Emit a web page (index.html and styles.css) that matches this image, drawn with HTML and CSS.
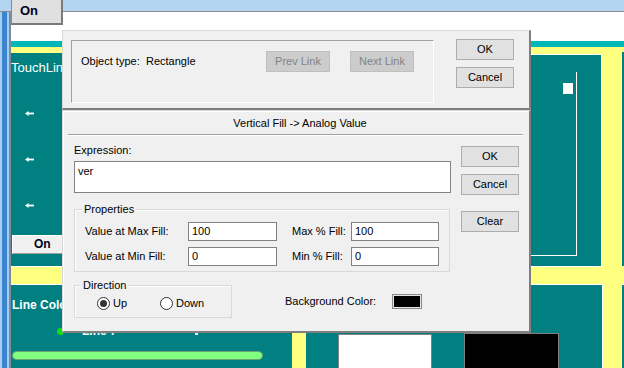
FILE: index.html
```html
<!DOCTYPE html>
<html>
<head>
<meta charset="utf-8">
<link rel="stylesheet" href="styles.css">
</head>
<body>
<div class="screen">
  <div class="titlebar"></div>
  <div class="main">
    <div class="frame"></div>
    <div class="canvas">
      <div class="obj strip-teal"></div>
      <div class="obj yellow-bg"></div>
      <div class="obj p-tl"></div>
      <div class="obj p-tr"></div>
      <div class="obj p-r"></div>
      <div class="obj p-bl"></div>
      <div class="obj p-br"></div>
      <div class="obj p-rr"></div>
      <div class="obj inner-outline"></div>
      <div class="obj wsquare"></div>
      <div class="obj wrect"></div>
      <div class="obj brect"></div>
      <div class="obj t-touch">TouchLine</div>
      <svg class="obj arrow a1" width="9" height="5" viewBox="0 0 9 5"><path d="M0 2.5 L3.5 0 L3.5 5 Z" fill="#fff"/><rect x="3" y="1.6" width="6" height="1.8" fill="#fff"/></svg>
      <svg class="obj arrow a2" width="9" height="5" viewBox="0 0 9 5"><path d="M0 2.5 L3.5 0 L3.5 5 Z" fill="#fff"/><rect x="3" y="1.6" width="6" height="1.8" fill="#fff"/></svg>
      <svg class="obj arrow a3" width="9" height="5" viewBox="0 0 9 5"><path d="M0 2.5 L3.5 0 L3.5 5 Z" fill="#fff"/><rect x="3" y="1.6" width="6" height="1.8" fill="#fff"/></svg>
      <div class="obj on-btn">On</div>
      <div class="obj t-linecol">Line Color</div>
      <div class="obj t-line7">Line 7</div>
      <div class="obj gdot"></div>
      <div class="obj wdash"></div>
      <div class="obj gline"></div>
    </div>
  </div>

  <div class="top-on">On</div>

  <div class="dlg dlg1">
    <div class="objbox">
      <span class="ot-label">Object type:</span>
      <span class="ot-value">Rectangle</span>
      <div class="btn dis">Prev Link</div>
      <div class="btn dis next">Next Link</div>
    </div>
    <div class="btncol1">
      <div class="btn">OK</div>
      <div class="btn">Cancel</div>
    </div>
  </div>

  <div class="dlg dlg2">
    <div class="title">Vertical Fill -&gt; Analog Value</div>
    <div class="sep"></div>
    <div class="body2">
      <div class="leftcol">
        <div class="lbl">Expression:</div>
        <div class="edit big">ver</div>
        <div class="group props">
          <span class="legend">Properties</span>
          <div class="pgrid">
            <span class="plbl">Value at Max Fill:</span>
            <div class="edit">100</div>
            <span class="plbl pl2">Max % Fill:</span>
            <div class="edit">100</div>
            <span class="plbl">Value at Min Fill:</span>
            <div class="edit">0</div>
            <span class="plbl pl2">Min % Fill:</span>
            <div class="edit">0</div>
          </div>
        </div>
        <div class="dirrow">
          <div class="group dir">
            <span class="legend dleg">Direction</span>
            <div class="radios">
              <div class="ritem first"><span class="radio on"></span><span>Up</span></div>
              <div class="ritem"><span class="radio"></span><span>Down</span></div>
            </div>
          </div>
          <span class="bglbl">Background Color:</span>
          <span class="swatch"></span>
        </div>
      </div>
      <div class="rightcol">
        <div class="btn">OK</div>
        <div class="btn b-cancel">Cancel</div>
        <div class="btn b-clear">Clear</div>
      </div>
    </div>
  </div>
</div>
</body>
</html>
```

FILE: styles.css
```css
html, body {
  margin: 0;
  padding: 0;
}
body {
  width: 624px;
  height: 368px;
  overflow: hidden;
  font-family: "Liberation Sans", Arial, sans-serif;
}
.screen {
  position: relative;
  width: 624px;
  height: 368px;
  overflow: hidden;
  display: flex;
  flex-direction: column;
  background: #fff;
}
.titlebar {
  height: 11px;
  flex: none;
  background: #b3d5f2;
  border-bottom: 1px solid #8c8c8c;
}
.main {
  flex: 1;
  display: flex;
  min-height: 0;
}
.frame {
  width: 11px;
  flex: none;
  background: linear-gradient(to right, #a9cdef 0 2px, #3b84d0 2px 7px, #a9cdef 7px 9px, #7a8a9a 9px 11px);
}
.canvas {
  flex: 1;
  position: relative;
  overflow: hidden;
  background: #fff;
}
.obj {
  position: absolute;
  box-sizing: border-box;
}
.strip-teal { left: 0; right: 0; top: 29px; height: 6px; background: #00b8b8; }
.yellow-bg { left: 0; right: 0; top: 35px; bottom: 0; background: #ffff80; }
.p-tl { left: -3px; top: 41px; width: 292px; height: 214px; background: #008080; border-bottom: 1px solid #fff; }
.p-tr { left: 289px; top: 42px; width: 302px; height: 213px; background: #008080; border: 1px solid #fff; border-left: none; }
.p-r { left: 610px; top: 40px; width: 20px; height: 214px; background: #008080; border-left: 1px solid #fff; }
.p-bl { left: -3px; top: 272px; width: 284px; height: 100px; background: #008080; border-top: 1px solid #fff; }
.p-br { left: 295px; top: 272px; width: 297px; height: 100px; background: #008080; border-top: 1px solid #fff; border-right: 1px solid #fff; }
.p-rr { left: 610px; top: 272px; width: 20px; height: 100px; background: #008080; border-left: 1px solid #fff; border-top: 1px solid #fff; }
.inner-outline { left: 329px; top: 60px; width: 237px; height: 184px; border-right: 1px solid #fff; border-bottom: 1px solid #fff; }
.wsquare { left: 552px; top: 71px; width: 10px; height: 11px; background: #fff; }
.wrect { left: 327px; top: 322px; width: 94px; height: 60px; background: #fff; border: 1px solid #808080; }
.brect { left: 453px; top: 321px; width: 95px; height: 60px; background: #000; border: 1px solid #808080; }
.t-touch {
  left: 0;
  top: 48px;
  color: #fff;
  font-size: 13px;
  line-height: 16px;
  white-space: nowrap;
}
.arrow { left: 14px; }
.a1 { top: 99px; }
.a2 { top: 145px; }
.a3 { top: 191px; }
.on-btn {
  left: 1px;
  top: 223px;
  width: 51px;
  height: 19px;
  background: #f0f0f0;
  border: 1px solid #a0a0a0;
  border-top-color: #fff;
  border-left-color: #fff;
  color: #000020;
  font-weight: bold;
  font-size: 12px;
  line-height: 17px;
  padding-left: 21px;
}
.t-linecol {
  left: 1px;
  top: 286px;
  color: #fff;
  font-weight: bold;
  font-size: 12px;
  line-height: 14px;
  white-space: nowrap;
}
.t-line7 {
  left: 71px;
  top: 312px;
  color: #fff;
  font-weight: bold;
  font-size: 12px;
  line-height: 14px;
  white-space: nowrap;
}
.gdot { left: 46px; top: 316px; width: 7px; height: 7px; border-radius: 50%; background: #10e010; }
.wdash { left: 184px; top: 321px; width: 3px; height: 2px; background: #fff; }
.gline {
  left: 1px;
  top: 339px;
  width: 251px;
  height: 9px;
  background: #80ff80;
  border: 1px solid #6fa06f;
  border-radius: 5px;
}

.top-on {
  position: absolute;
  left: 11px;
  top: -10px;
  width: 52px;
  height: 35px;
  box-sizing: border-box;
  background: #e0e0e0;
  border-left: 1px solid #8a8a8a;
  border-right: 2px solid #7a7a7a;
  border-bottom: 2px solid #7a7a7a;
  color: #000020;
  font-weight: bold;
  font-size: 13px;
  line-height: 15px;
  padding: 13px 0 0 8px;
}

.dlg {
  position: absolute;
  left: 62px;
  width: 469px;
  box-sizing: border-box;
  background: #f0f0f0;
  border-left: 1px solid #d8d8d8;
  border-top: 1px solid #d8d8d8;
  border-right: 2px solid #7f7f7f;
  border-bottom: 2px solid #7f7f7f;
  font-size: 11px;
  line-height: 13px;
  color: #000;
}
.dlg1 {
  top: 30px;
  height: 80px;
  display: flex;
  align-items: flex-start;
  padding: 9px 0 0 8px;
}
.objbox {
  box-sizing: border-box;
  width: 363px;
  height: 63px;
  border: 1px solid;
  border-color: #a0a0a0 #fff #fff #a0a0a0;
  display: flex;
  align-items: center;
  align-self: flex-start;
  padding: 0 0 21px 9px;
}
.ot-label { width: 65px; flex: none; }
.ot-value { width: 120px; flex: none; }
.btn {
  box-sizing: border-box;
  width: 58px;
  height: 21px;
  flex: none;
  background: #e1e1e1;
  border: 1px solid #adadad;
  display: flex;
  align-items: center;
  justify-content: center;
}
.btn.dis {
  width: 64px;
  background: #cccccc;
  border-color: #bfbfbf;
  color: #838383;
}
.btn.next { margin-left: 20px; }
.btncol1 {
  margin: -1px 0 0 22px;
  display: flex;
  flex-direction: column;
  gap: 7px;
}

.dlg2 {
  top: 110px;
  height: 223px;
  box-shadow: inset 1px 1px 0 #fff;
}
.title {
  text-align: center;
  padding: 6px 0 4px 8px;
  height: 13px;
}
.sep {
  margin: 0 6px 0 5px;
  border-top: 1px solid #a0a0a0;
  border-bottom: 1px solid #fff;
}
.body2 {
  display: flex;
  padding-left: 11px;
}
.leftcol {
  width: 377px;
  padding-top: 8px;
}
.lbl { height: 13px; }
.edit {
  box-sizing: border-box;
  background: #fff;
  border: 1px solid #828282;
  padding: 2px 3px;
  line-height: 13px;
  height: 19px;
}
.edit.big {
  margin-top: 4px;
  height: 32px;
  padding-top: 3px;
}
.group {
  position: relative;
  box-sizing: border-box;
  border: 1px solid #d9d9d9;
  box-shadow: inset 1px 1px 0 #fff;
}
.legend {
  position: absolute;
  top: -7px;
  left: 7px;
  padding: 0 2px;
  background: #f0f0f0;
}
.props {
  margin-top: 16px;
  width: 376px;
  padding: 12px 0 5px 10px;
}
.pgrid {
  display: grid;
  grid-template-columns: 103px 89px 74px 88px;
  grid-auto-rows: 19px;
  row-gap: 6px;
  align-items: center;
}
.pl2 { padding-left: 15px; }
.dirrow {
  margin-top: 13px;
  display: flex;
  align-items: center;
}
.dir {
  width: 158px;
  height: 33px;
  padding: 11px 0 0 22px;
}
.dleg { left: 6px; }
.radios { display: flex; }
.ritem {
  display: flex;
  align-items: center;
  gap: 3px;
  height: 13px;
}
.ritem.first { width: 63px; }
.radio {
  box-sizing: border-box;
  width: 13px;
  height: 13px;
  border: 1px solid #333;
  border-radius: 50%;
  background: #fff;
  display: flex;
  align-items: center;
  justify-content: center;
}
.radio.on::after {
  content: "";
  width: 7px;
  height: 7px;
  border-radius: 50%;
  background: #333;
}
.bglbl {
  margin-left: 53px;
  width: 107px;
}
.swatch {
  box-sizing: border-box;
  width: 30px;
  height: 15px;
  background: #000;
  border: 1px solid #8a8a8a;
  box-shadow: inset 0 0 0 1px #e6e6e6;
}
.rightcol {
  margin-left: 10px;
  padding-top: 10px;
  display: flex;
  flex-direction: column;
}
.b-cancel { margin-top: 7px; }
.b-clear { margin-top: 16px; }
```
